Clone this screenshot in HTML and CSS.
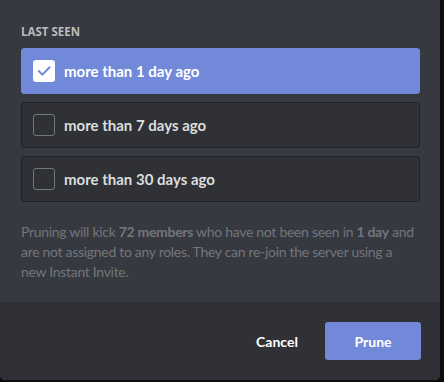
FILE: index.html
```html
<!DOCTYPE html>
<html lang="en">
<head>
    <meta charset="UTF-8">
    <title>Prune Members</title>
    <link rel="stylesheet" href="styles.css">
</head>
<body>

    <div class="modal">
        <div class="modal-body">
            <h5 class="label">Last Seen</h5>

            <div class="options">
                <div class="option selected">
                    <span class="checkbox">
                        <svg width="22" height="22" viewBox="0 0 22 22">
                            <path d="M6 11.2 L9.4 14.6 L16.4 7.4" fill="none" stroke="#7289da" stroke-width="2" stroke-linecap="square"/>
                        </svg>
                    </span>
                    <span class="option-text">more than 1 day ago</span>
                </div>
                <div class="option">
                    <span class="checkbox"></span>
                    <span class="option-text">more than 7 days ago</span>
                </div>
                <div class="option">
                    <span class="checkbox"></span>
                    <span class="option-text">more than 30 days ago</span>
                </div>
            </div>

            <p class="hint">Pruning will kick <b>72 members</b> who have not been seen in <b>1 day</b> and are not assigned to any roles. They can re-join the server using a new Instant Invite.</p>
        </div>

        <div class="modal-footer">
            <button class="btn btn-link">Cancel</button>
            <button class="btn btn-primary">Prune</button>
        </div>
    </div>

</body>
</html>
```

FILE: styles.css
```css
body {
    margin: 0;
    padding: 0;
    background-color: #0c0c0e;
    font-family: 'Lato', 'Open Sans', sans-serif;
}

.modal {
    width: 440px;
    height: 380px;
    background: #36393f;
    border-radius: 0 0 5px 5px;
    overflow: hidden;
    display: flex;
    flex-direction: column;
}

.modal-body {
    padding: 24px 20px 20px 21px;
    flex: 1;
}

.label {
    margin: 0 0 8px;
    font-family: 'Open Sans', sans-serif;
    font-size: 11.5px;
    line-height: 16px;
    font-weight: 700;
    text-transform: uppercase;
    color: #b9bbbe;
}

.options {
    display: flex;
    flex-direction: column;
    gap: 8px;
}

.option {
    height: 46px;
    box-sizing: border-box;
    display: flex;
    align-items: center;
    padding: 0 11px;
    background: #2f3136;
    border: 1px solid #202225;
    border-radius: 3px;
    color: #dcddde;
}

.option.selected {
    background: #7289da;
    border-color: #7289da;
    color: #fff;
}

.checkbox {
    width: 22px;
    height: 22px;
    box-sizing: border-box;
    border: 1px solid #72767d;
    border-radius: 3px;
    margin-right: 9px;
    flex-shrink: 0;
}

.option.selected .checkbox {
    background: #fff;
    border: none;
}

.checkbox svg {
    display: block;
}

.option-text {
    font-size: 15px;
    font-weight: 700;
}

.hint {
    margin: 20px 0 0;
    padding-right: 2px;
    font-size: 14px;
    line-height: 20px;
    letter-spacing: -0.3px;
    color: #72767d;
}

.hint b {
    font-weight: 700;
}

.modal-footer {
    background: #2f3136;
    padding: 20px 19px 20px 20px;
    display: flex;
    justify-content: flex-end;
}

.btn {
    min-width: 96px;
    height: 38px;
    padding: 2px 16px;
    border: none;
    border-radius: 3px;
    font-family: inherit;
    font-size: 14px;
    font-weight: 700;
    color: #fff;
    cursor: pointer;
}

.btn-link {
    background: transparent;
}

.btn-primary {
    background: #7289da;
}
```
